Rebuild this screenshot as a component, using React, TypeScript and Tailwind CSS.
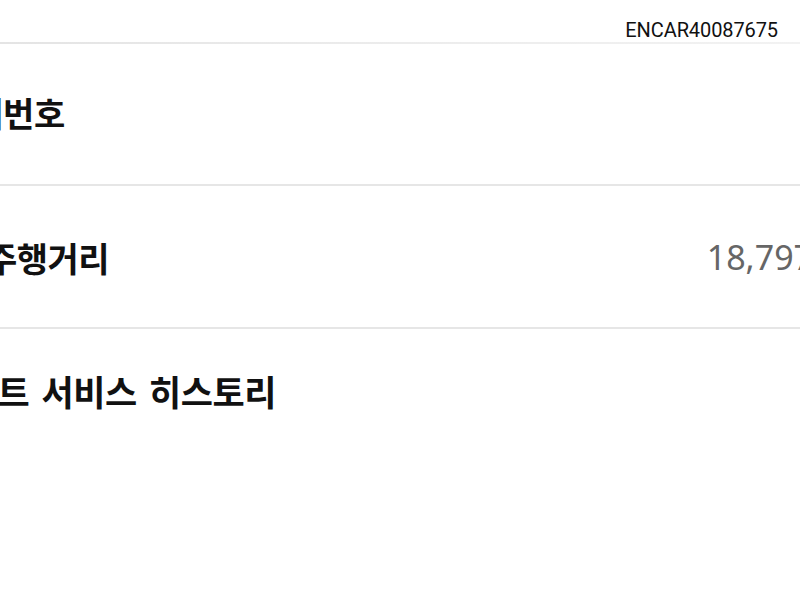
const KR = { fontFamily: '"Noto Sans CJK KR", "Noto Sans", sans-serif' };

function Divider() {
  return <div className="h-[2px] w-full bg-[#e6e6e6]" />;
}

export default function App() {
  return (
    <div className="w-[800px] h-[600px] overflow-hidden bg-white" style={KR}>
      {/* top bar */}
      <div className="h-[42px] flex items-end justify-end pr-[22px] pb-[2px]">
        <span className="text-[20px] leading-none text-[#111] tracking-[-0.1px]" style={{ fontFamily: "Roboto, sans-serif" }}>
          ENCAR40087675
        </span>
      </div>
      <div className="h-[2px] w-full bg-gradient-to-r from-[#e4e4e4] via-[#ececec] to-[#f2f2f2]" />

      <div className="h-[140px] flex items-center pb-[4px]">
        <span className="-ml-[59px] text-[34px] font-bold text-[#111] whitespace-nowrap tracking-[-0.3px]">차대번호</span>
      </div>
      <Divider />

      <div className="h-[141px] flex items-center pt-[2px]">
        <span className="-ml-[14px] text-[34px] font-bold text-[#111] whitespace-nowrap tracking-[-0.5px]">주행거리</span>
        <span
          className="ml-auto -mr-[63px] text-[34px] font-normal text-[#666] whitespace-nowrap"
          style={{ fontFamily: '"Noto Sans", Roboto, sans-serif' }}
        >
          18,797km
        </span>
      </div>
      <Divider />

      <div className="h-[140px] flex items-start pt-[36px]">
        <span className="-ml-[66px] text-[35px] font-bold text-[#111] whitespace-nowrap tracking-[-0.5px] [word-spacing:5px]">
          스마트 서비스 히스토리
        </span>
      </div>
    </div>
  );
}
